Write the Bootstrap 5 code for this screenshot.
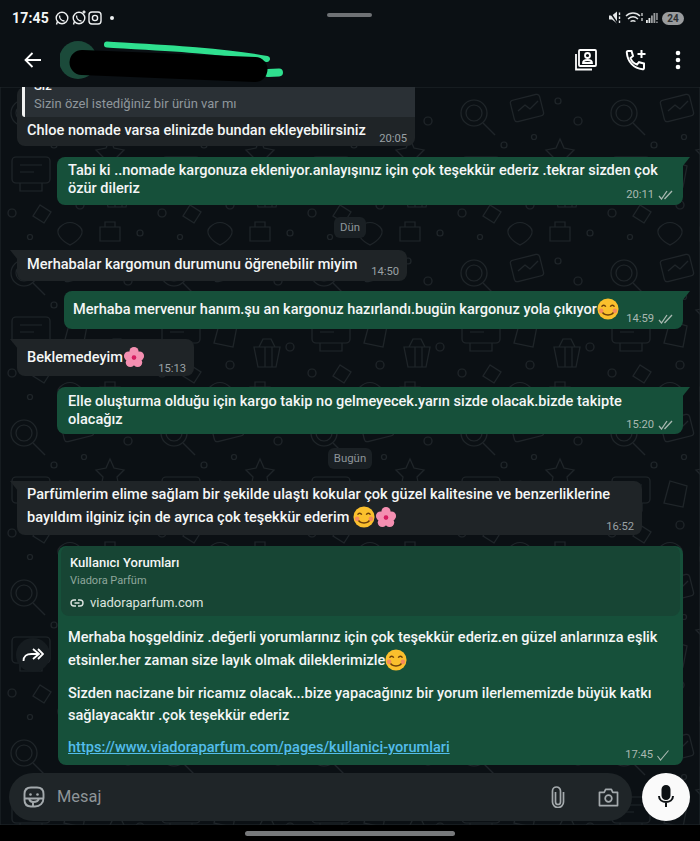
<!DOCTYPE html>
<html lang="tr">
<head>
    <meta charset="UTF-8">
    <title>Sohbet</title>
    <link href="https://cdn.jsdelivr.net/npm/bootstrap@5.3.0/dist/css/bootstrap.min.css" rel="stylesheet">
    <style>
        html, body { height: 100%; }
        body { background: #0b1014; color: #f4f6f6; font-family: Roboto, "Liberation Sans", sans-serif; overflow: hidden; }
        .phone { width: 700px; height: 841px; background: #0b1014; }

        .status-bar { height: 35px; flex-shrink: 0; padding: 9px 16px 0 12px; position: relative; }
        .clock { font-size: 14px; font-weight: 700; line-height: 18px; letter-spacing: .2px; }
        .status-dot { width: 4px; height: 4px; border-radius: 50%; background: #eef0f1; margin-left: 7px; }
        .fold-pill { position: absolute; left: 327px; top: 13px; width: 45px; height: 4px; border-radius: 2px; background: #6f7275; }
        .battery { width: 22px; height: 13px; border-radius: 7px; background: #9a9c9e; color: #2d3033; font-size: 10px; font-weight: 700; line-height: 13px; text-align: center; }

        .top-bar { height: 52px; flex-shrink: 0; padding: 0 16px 3px 24px; position: relative; }
        .scribble { position: absolute; left: 60px; top: 0; }
        .call-icon { margin-left: 26px; }
        .more-icon { margin-left: 24px; }

        .chat { height: 738px; flex-shrink: 0; position: relative; overflow: hidden; }
        .doodles { position: absolute; inset: 0; }
        .msg-list { height: 686px; position: relative; }

        .bubble { font-size: 14.55px; font-weight: 500; line-height: 18px; border-radius: 8px; position: relative; }
        .bubble-in { background: #1f2427; margin-left: 17px; }
        .bubble-out { background: #16503a; margin-left: auto; margin-right: 17px; }
        .tail-in { border-top-left-radius: 0; }
        .tail-out { border-top-right-radius: 0; }
        .tail-in::before, .tail-out::before { content: ""; position: absolute; top: 0; width: 8px; height: 10px; }
        .tail-in::before { left: -7px; background: #1f2427; clip-path: polygon(0 0, 100% 0, 100% 100%); }
        .tail-out::before { right: -7px; background: #16503a; clip-path: polygon(0 0, 100% 0, 0 100%); }

        .stamp { position: absolute; right: 9px; bottom: 3px; font-size: 11.2px; font-weight: 400; line-height: 14px; color: #a9b8b1; display: flex; align-items: center; gap: 4px; }
        .bubble-in .stamp { color: #9aa1a5; right: 8px; bottom: 0; }
        .bubble-in.msg-e .stamp { bottom: 2px; }
        .bubble-in.msg-k .stamp { bottom: 1px; }
        .msg-g .stamp { bottom: 2px; }
        .msg-i .stamp { right: 14px; }

        .msg-a { width: 398px; height: 59px; }
        .msg-a-text { padding: 5px 0 0 10px; }
        .msg-b { width: 626px; height: 48px; margin-top: 11px; padding: 5px 15px 0 11px; }
        .msg-c { margin-top: 12px; }
        .msg-e { width: 390px; height: 31px; margin-top: 12px; padding: 6px 0 0 10px; }
        .msg-f { width: 619px; height: 38px; margin-top: 10px; padding: 7px 15px 0 9px; }
        .msg-h { width: 177px; height: 37px; margin-top: 10px; padding: 7px 0 0 10px; }
        .msg-g { width: 626px; height: 47px; margin-top: 11px; padding: 6px 15px 0 11px; }
        .msg-j { margin-top: 14px; }
        .msg-k { width: 625px; height: 54px; margin-top: 12px; padding: 3px 20px 0 10px; line-height: 22px; }
        .msg-i { width: 625px; height: 219px; margin-top: 11px; line-height: 22px; }

        .quote { background: #2a3035; height: 30px; margin-left: 5px; border-left: 3px solid #f1f2f2; border-radius: 0 0 0 3px; padding-left: 9px; font-size: 13px; font-weight: 400; line-height: 20px; color: #8f979c; overflow: hidden; }
        .quote-name { color: #f4f6f6; font-weight: 500; margin-top: -10px; line-height: 18px; height: 18px; }
        .quote-line { margin-top: -1px; }
        .day-tag { width: max-content; margin-left: auto; margin-right: auto; background: #1a2024; color: #8d9599; font-size: 11.4px; font-weight: 400; line-height: 21px; padding: 0 6px; border-radius: 6px; }
        .mood { width: 22px; height: 22px; vertical-align: -6px; }

        .preview { background: #174534; margin: 3px 3px 0; height: 70px; border-radius: 8px; padding: 7px 9px; }
        .preview-title { font-size: 13px; font-weight: 500; line-height: 20px; }
        .preview-site { font-size: 11px; font-weight: 400; line-height: 15px; color: #8fa79c; }
        .preview-link { font-size: 13px; font-weight: 400; line-height: 20px; color: #dce3df; margin-top: 5px; gap: 6px; }
        .msg-body { padding: 11px 14px 0 10px; }
        .msg-para { margin-bottom: 10.5px; }
        .web-link { color: #53bdeb; }
        .forward-btn { position: absolute; left: 16px; top: 551px; width: 34px; height: 34px; border-radius: 50%; background: #161c20; }

        .input-row { height: 48px; position: relative; }
        .composer { height: 48px; background: #1f2528; border-radius: 24px; margin-left: 9px; width: 623px; padding: 0 13px 0 13px; color: #8e9599; font-size: 16.4px; }
        .composer-hint { margin-left: 11px; }
        .cam-icon { margin-left: 33px; }
        .mic-btn { width: 48px; height: 48px; border-radius: 50%; background: #fafafa; margin-left: 10px; }
        .gesture-row { flex: 1 1 auto; background: #000; padding-top: 6px; }
        .gesture-bar { width: 210px; height: 5px; border-radius: 3px; background: #77797b; margin: 0 auto; }
    </style>
</head>
<body>
    <svg width="0" height="0" class="position-absolute">
        <defs>
            <symbol id="smile" viewBox="0 0 24 24"><circle cx="12" cy="12" r="11.500" fill="#fbc02d"/><path d="M5 9.500c1-2 3.500-2 4.500 0M14.500 9.500c1-2 3.500-2 4.500 0" fill="none" stroke="#6b3f0a" stroke-width="1.600"/><path d="M5 14c2 6 12 6 14 0" fill="none" stroke="#6b3f0a" stroke-width="1.600"/><circle cx="4.500" cy="14" r="2.500" fill="#f48a5c"/><circle cx="19.500" cy="14" r="2.500" fill="#f48a5c"/></symbol>
            <symbol id="blossom" viewBox="0 0 24 24"><g fill="#f48fb1"><circle cx="12" cy="6" r="5"/><circle cx="6" cy="11" r="5"/><circle cx="18" cy="11" r="5"/><circle cx="8" cy="18" r="5"/><circle cx="16" cy="18" r="5"/></g><circle cx="12" cy="12.500" r="2.500" fill="#d81b60"/></symbol>
            <symbol id="ticks" viewBox="0 0 16 10"><path d="M1 6l2.500 3L9 1M6.500 9L14 1" fill="none" stroke="#a9b8b1" stroke-width="1.300"/></symbol>
        </defs>
    </svg>

    <div class="phone d-flex flex-column">

        <div class="status-bar d-flex justify-content-between align-items-start">
            <div class="d-flex align-items-center">
                <span class="clock">17:45</span>
                <svg class="ms-1" width="50" height="18" viewBox="0 0 50 18" fill="none" stroke="#eef0f1" stroke-width="1.400">
                    <circle cx="9" cy="9" r="5.800"/><path d="M3.500 15.500l1.200-3.800M6.500 6.500c0 3.500 2.500 5.500 5 5.500"/>
                    <circle cx="26" cy="9" r="5.800"/><path d="M20.500 15.500l1.200-3.800M23.500 6.500c0 3.500 2.500 5.500 5 5.500M31 1.500v3M29.500 3h3"/>
                    <rect x="36" y="3" width="12" height="12" rx="3"/><circle cx="42" cy="9" r="2.600"/>
                </svg>
                <span class="status-dot"></span>
            </div>
            <div class="fold-pill"></div>
            <div class="d-flex align-items-center gap-1">
                <svg width="50" height="18" viewBox="0 0 50 18" fill="#e4e6e7">
                    <path d="M1 6.500h3l5-4v12l-5-4H1z"/><path d="M1 2l9 13" stroke="#0b1014" stroke-width="1.400"/><path d="M11.500 3.500v2.500m0 1.500v2.500m0 1.500v2.500" stroke="#e4e6e7" stroke-width="1.400"/>
                    <path d="M18 7c4-4 10-4 14 0M20 10c3-2.600 7-2.600 10 0M22.500 12.500c1.500-1 3.500-1 5 0" fill="none" stroke="#e4e6e7" stroke-width="1.400"/>
                    <path d="M34 4v3m0 2v3" stroke="#e4e6e7" stroke-width="1.200"/>
                    <rect x="38" y="11" width="1.800" height="3"/><rect x="40.500" y="9" width="1.800" height="5"/><rect x="43" y="6.500" width="1.800" height="7.500" fill="#9a9c9e"/><rect x="45.500" y="4" width="1.800" height="10" fill="#9a9c9e"/><rect x="48.200" y="4" width="1.500" height="7" fill="#9a9c9e"/><rect x="48.200" y="12.500" width="1.500" height="1.500" fill="#9a9c9e"/>
                </svg>
                <div class="battery">24</div>
            </div>
        </div>

        <div class="top-bar d-flex align-items-center justify-content-between">
            <svg width="18" height="18" viewBox="0 0 18 18" fill="none" stroke="#fff" stroke-width="1.800"><path d="M17 9H1.500M8.500 2L1.500 9l7 7"/></svg>
            <svg class="scribble" width="240" height="52" viewBox="0 0 240 52">
                <circle cx="18" cy="25" r="19" fill="#1b4a3a"/>
                <path d="M47 9.500C90 12 160 15 207 24" stroke="#2fe08f" stroke-width="6" fill="none" stroke-linecap="round"/>
                <path d="M208 38l11-.5" stroke="#2fe08f" stroke-width="8" fill="none" stroke-linecap="round"/>
                <path d="M22 27.500L195 34.500" stroke="#000" stroke-width="25" fill="none" stroke-linecap="round"/>
            </svg>
            <div class="d-flex align-items-center">
                <svg width="24" height="24" viewBox="0 0 24 24" fill="none" stroke="#fff" stroke-width="1.800">
                    <rect x="5" y="2" width="17" height="16" rx="1"/><path d="M2 6v15.500h16"/><circle cx="13.500" cy="7.500" r="2.500"/><path d="M9 15c0-4 9-4 9 0z"/>
                </svg>
                <svg class="call-icon" width="24" height="24" viewBox="0 0 24 24" fill="none" stroke="#fff" stroke-width="2">
                    <path d="M4 3h3.500l1.500 5-2.500 2c1 3 3.500 5.500 6.500 6.500l2-2.300 5 1.300V20c0 .8-.6 1.500-1.500 1.300C10 20.500 3.500 14 2.800 4.500 2.700 3.700 3.300 3 4 3z"/><path d="M17.500 2v8M13.500 6h8"/>
                </svg>
                <svg class="more-icon" width="12" height="24" viewBox="0 0 12 24" fill="#fff"><circle cx="6" cy="5" r="2.300"/><circle cx="6" cy="12" r="2.300"/><circle cx="6" cy="19" r="2.300"/></svg>
            </div>
        </div>

        <div class="chat">
            <svg class="doodles" width="700" height="738" fill="none" stroke="#1f2529" stroke-width="1.200">
                <defs>
                    <pattern id="wall" width="150" height="160" patternUnits="userSpaceOnUse">
                        <circle cx="24" cy="26" r="13"/><circle cx="24" cy="26" r="8"/><path d="M33 36l12 12"/>
                        <rect x="62" y="10" width="30" height="22" rx="3" transform="rotate(-14 77 21)"/><path d="M68 24l7-6 5 4 8-8"/>
                        <circle cx="108" cy="14" r="3"/><circle cx="128" cy="34" r="4"/><circle cx="54" cy="58" r="3"/><circle cx="84" cy="50" r="2.500"/>
                        <path d="M110 52l4 9 10 2-7 7 2 10-9-5-9 5 2-10-7-7 10-2z"/>
                        <rect x="12" y="70" width="38" height="26" rx="4"/><path d="M20 96v8h22v-8M20 78h22M20 85h14"/>
                        <path d="M70 74l17 5-4 21-19-4z"/><circle cx="80" cy="118" r="4"/><circle cx="140" cy="100" r="4"/>
                        <path d="M104 100h26l-4 20h-18zM109 100l4-8h8l4 8M115 100v20M122 100v20"/>
                        <circle cx="12" cy="126" r="4"/><path d="M40 118l11 7-7 11-11-7z"/><circle cx="140" cy="146" r="3"/>
                        <path d="M60 140c6-6 14-6 20 0s-2 14-10 18c-8-4-16-12-10-18zM100 140h20v14h-20zM105 140v-5h10v5"/><circle cx="30" cy="150" r="2.500"/>
                    </pattern>
                </defs>
                <rect width="700" height="738" fill="url(#wall)"/>
            </svg>

            <div class="msg-list">
                <div class="bubble bubble-in msg-a">
                    <div class="quote">
                        <div class="quote-name">Siz</div>
                        <div class="quote-line">Sizin özel istediğiniz bir ürün var mı</div>
                    </div>
                    <div class="msg-a-text">Chloe nomade varsa elinizde bundan ekleyebilirsiniz</div>
                    <span class="stamp">20:05</span>
                </div>

                <div class="bubble bubble-out tail-out msg-b">
                    Tabi ki ..nomade kargonuza ekleniyor.anlayışınız için çok teşekkür ederiz .tekrar sizden çok özür dileriz
                    <span class="stamp">20:11 <svg width="16" height="10"><use href="#ticks"/></svg></span>
                </div>

                <div class="day-tag msg-c">Dün</div>

                <div class="bubble bubble-in tail-in msg-e">
                    Merhabalar kargomun durumunu öğrenebilir miyim
                    <span class="stamp">14:50</span>
                </div>

                <div class="bubble bubble-out tail-out msg-f">
                    Merhaba mervenur hanım.şu an kargonuz hazırlandı.bugün kargonuz yola çıkıyor<svg class="mood"><use href="#smile"/></svg>
                    <span class="stamp">14:59 <svg width="16" height="10"><use href="#ticks"/></svg></span>
                </div>

                <div class="bubble bubble-in tail-in msg-h">
                    Beklemedeyim<svg class="mood"><use href="#blossom"/></svg>
                    <span class="stamp">15:13</span>
                </div>

                <div class="bubble bubble-out tail-out msg-g">
                    Elle oluşturma olduğu için kargo takip no gelmeyecek.yarın sizde olacak.bizde takipte olacağız
                    <span class="stamp">15:20 <svg width="16" height="10"><use href="#ticks"/></svg></span>
                </div>

                <div class="day-tag msg-j">Bugün</div>

                <div class="bubble bubble-in tail-in msg-k">
                    Parfümlerim elime sağlam bir şekilde ulaştı kokular çok güzel kalitesine ve benzerliklerine bayıldım ilginiz için de ayrıca çok teşekkür ederim <svg class="mood"><use href="#smile"/></svg><svg class="mood"><use href="#blossom"/></svg>
                    <span class="stamp">16:52</span>
                </div>

                <div class="bubble bubble-out msg-i">
                    <div class="preview">
                        <div class="preview-title">Kullanıcı Yorumları</div>
                        <div class="preview-site">Viadora Parfüm</div>
                        <div class="preview-link d-flex align-items-center">
                            <svg width="14" height="14" viewBox="0 0 14 14" fill="none" stroke="#dce3df" stroke-width="1.400"><path d="M6 4H4a3 3 0 0 0 0 6h2M8 4h2a3 3 0 0 1 0 6H8M4.500 7h5"/></svg>
                            viadoraparfum.com
                        </div>
                    </div>
                    <div class="msg-body">
                        <div class="msg-para">Merhaba hoşgeldiniz .değerli yorumlarınız için çok teşekkür ederiz.en güzel anlarınıza eşlik etsinler.her zaman size layık olmak dileklerimizle<svg class="mood"><use href="#smile"/></svg></div>
                        <div class="msg-para">Sizden nacizane bir ricamız olacak...bize yapacağınız bir yorum ilerlememizde büyük katkı sağlayacaktır .çok teşekkür ederiz</div>
                        <a class="web-link" href="#">https://www.viadoraparfum.com/pages/kullanici-yorumlari</a>
                    </div>
                    <span class="stamp">17:45 <svg width="12" height="11" viewBox="0 0 12 11" fill="none" stroke="#a9b8b1" stroke-width="1.100"><path d="M.5 6l3 4L11.500 .5"/></svg></span>
                </div>

                <div class="forward-btn d-flex align-items-center justify-content-center">
                    <svg width="22" height="16" viewBox="0 0 22 16" fill="none" stroke="#fff" stroke-width="1.800"><path d="M1.500 14c0-5 3-7 8-7h7M11 2l6 5-6 5M16 2l5 5-5 5"/></svg>
                </div>
            </div>

            <div class="input-row d-flex align-items-center">
                <div class="composer d-flex align-items-center">
                    <svg width="24" height="24" viewBox="0 0 24 24" fill="none" stroke="#a4aaad" stroke-width="1.900"><path d="M9 2.500h6c4 0 6.500 2.500 6.500 6.500v4c0 5-3.500 8.500-8.500 8.500H9c-4 0-6.500-2.500-6.500-6.500V9c0-4 2.500-6.500 6.500-6.500z"/><circle cx="8.500" cy="9.500" r="1.300" fill="#a4aaad" stroke="none"/><circle cx="15.500" cy="9.500" r="1.300" fill="#a4aaad" stroke="none"/><path d="M3 13.500h18M7 13.500c.5 2.500 2.500 3.500 4 3.500v4M17 13.500c-.5 2.500-2.500 3.500-6 3.500"/></svg>
                    <span class="composer-hint flex-grow-1">Mesaj</span>
                    <svg width="14" height="22" viewBox="0 0 14 22" fill="none" stroke="#a4aaad" stroke-width="1.700"><path d="M4.500 6v10a2.500 2.500 0 0 0 5 0V5a4 4 0 0 0-8 0v11a5.500 5.500 0 0 0 11 0V6"/></svg>
                    <svg class="cam-icon" width="21" height="19" viewBox="0 0 22 20" fill="none" stroke="#a4aaad" stroke-width="1.800"><path d="M1.500 4.500h5l1.500-3h6l1.500 3h5v14h-19z" stroke-linejoin="round"/><circle cx="11" cy="11" r="3.500"/></svg>
                </div>
                <div class="mic-btn d-flex align-items-center justify-content-center">
                    <svg width="18" height="24" viewBox="0 0 18 24" fill="none" stroke="#0d1114" stroke-width="2"><rect x="5.500" y="1" width="7" height="13" rx="3.500" fill="#0d1114"/><path d="M2 11c0 8 14 8 14 0M9 17v5"/></svg>
                </div>
            </div>
        </div>

        <div class="gesture-row"><div class="gesture-bar"></div></div>
    </div>
</body>
</html>
